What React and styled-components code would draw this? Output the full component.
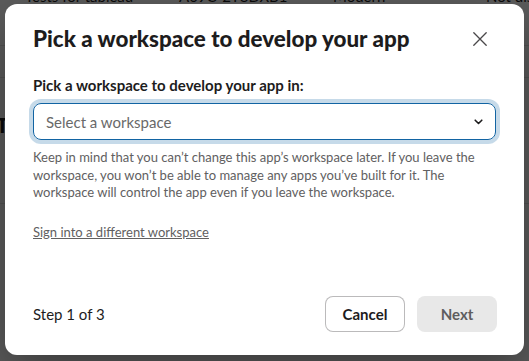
import React from "react";
import styled, { createGlobalStyle } from "styled-components";

const GlobalStyle = createGlobalStyle`
  html, body {
    margin: 0;
    padding: 0;
    width: 529px;
    height: 361px;
    overflow: hidden;
    font-family: Lato, "Noto Sans", "Liberation Sans", sans-serif;
    -webkit-font-smoothing: antialiased;
  }
`;

const Page = styled.div`
  position: relative;
  width: 529px;
  height: 361px;
  overflow: hidden;
  background: #fff;
  color: #1d1c1d;
`;

const BgRow = styled.div`
  display: grid;
  grid-template-columns: 154px 154px 153px 1fr;
  padding-left: 25px;
  height: ${(p) => p.h}px;
  margin-top: ${(p) => p.mt || 0}px;
  border-bottom: 1px solid #e2e2e2;
  font-size: 15px;
  line-height: 22px;
  white-space: nowrap;
  overflow: hidden;
`;

const BgHeading = styled.div`
  margin-top: 33px;
  margin-left: -4px;
  font-size: 21px;
  font-weight: 900;
  line-height: 28px;
  height: 92px;
  border-bottom: 1px solid #e2e2e2;
`;

const Backdrop = styled.div`
  position: absolute;
  inset: 0;
  background: rgba(0, 0, 0, 0.64);
  display: flex;
  justify-content: center;
  align-items: flex-start;
  padding-top: 4px;
`;

const Modal = styled.div`
  width: 519px;
  height: 351px;
  background: #fff;
  border-radius: 12px;
  box-shadow: 0 18px 48px rgba(0, 0, 0, 0.35);
  display: flex;
  flex-direction: column;
  box-sizing: border-box;
`;

const Header = styled.div`
  height: 70px;
  padding: 0 26px 0 28px;
  display: flex;
  align-items: center;
  justify-content: space-between;
`;

const Title = styled.h1`
  margin: 0;
  font-size: 22.4px;
  font-weight: 900;
  line-height: 30px;
  color: #1d1c1d;
`;

const CloseButton = styled.button`
  width: 36px;
  height: 36px;
  border: none;
  background: none;
  padding: 0;
  display: flex;
  align-items: center;
  justify-content: center;
  color: #4a484a;
  cursor: pointer;
`;

const Body = styled.div`
  flex: 1;
  padding: 0 28px;
`;

const Label = styled.label`
  display: block;
  font-size: 15px;
  font-weight: 700;
  line-height: 22px;
  color: #1d1c1d;
  margin-bottom: 7px;
`;

const Select = styled.div`
  height: 37px;
  box-sizing: border-box;
  border: 1px solid #1264a3;
  border-radius: 8px;
  box-shadow: 0 0 0 4px rgba(18, 100, 163, 0.24);
  display: flex;
  align-items: center;
  justify-content: space-between;
  padding: 0 12px 0 12px;
  font-size: 15px;
  color: #696969;
`;

const Help = styled.p`
  margin: 9px 0 0;
  font-size: 13px;
  line-height: 17.5px;
  color: #616061;
`;

const Link = styled.a`
  display: inline-block;
  margin-top: 21px;
  font-size: 13px;
  line-height: 18px;
  color: #616061;
  text-decoration: underline;
  cursor: pointer;
`;

const Footer = styled.div`
  padding: 0 27px 23px 28px;
  display: flex;
  align-items: center;
  justify-content: space-between;
`;

const Step = styled.span`
  font-size: 15px;
  color: #1d1c1d;
`;

const Actions = styled.div`
  display: flex;
  gap: 12px;
`;

const Button = styled.button`
  width: 80px;
  height: 36px;
  border-radius: 8px;
  font-family: inherit;
  font-size: 15px;
  font-weight: 700;
  padding: 0;
  cursor: pointer;
  border: 1px solid ${(p) => (p.disabled ? "transparent" : "rgba(29, 28, 29, 0.3)")};
  background: ${(p) => (p.disabled ? "#e8e8e8" : "#fff")};
  color: ${(p) => (p.disabled ? "#5e5d5e" : "#1d1c1d")};
`;

export default function App() {
  return (
    <>
      <GlobalStyle />
      <Page>
        <BgRow h={60} mt={-15}>
          <span>Tests for tableau</span>
          <span>A09C-2T8DXB1</span>
          <span>Modern</span>
          <span>Not displayed</span>
        </BgRow>
        <BgRow h={31} />
        <BgHeading>Tests</BgHeading>
        <Backdrop>
          <Modal role="dialog">
            <Header>
              <Title>Pick a workspace to develop your app</Title>
              <CloseButton aria-label="Close">
                <svg width="14" height="14" viewBox="0 0 14 14">
                  <path d="M0.8 0.8 L13.2 13.2 M13.2 0.8 L0.8 13.2" stroke="currentColor" strokeWidth="1.3" strokeLinecap="round" />
                </svg>
              </CloseButton>
            </Header>
            <Body>
              <Label>Pick a workspace to develop your app in:</Label>
              <Select>
                <span>Select a workspace</span>
                <svg width="9" height="6" viewBox="0 0 9 6">
                  <path d="M1.2 1.2 L4.5 4.5 L7.8 1.2" fill="none" stroke="#1d1c1d" strokeWidth="1.6" strokeLinecap="round" strokeLinejoin="round" />
                </svg>
              </Select>
              <Help>
                Keep in mind that you can’t change this app’s workspace later. If you leave the
                workspace, you won’t be able to manage any apps you’ve built for it. The
                workspace will control the app even if you leave the workspace.
              </Help>
              <Link>Sign into a different workspace</Link>
            </Body>
            <Footer>
              <Step>Step 1 of 3</Step>
              <Actions>
                <Button>Cancel</Button>
                <Button disabled>Next</Button>
              </Actions>
            </Footer>
          </Modal>
        </Backdrop>
      </Page>
    </>
  );
}
